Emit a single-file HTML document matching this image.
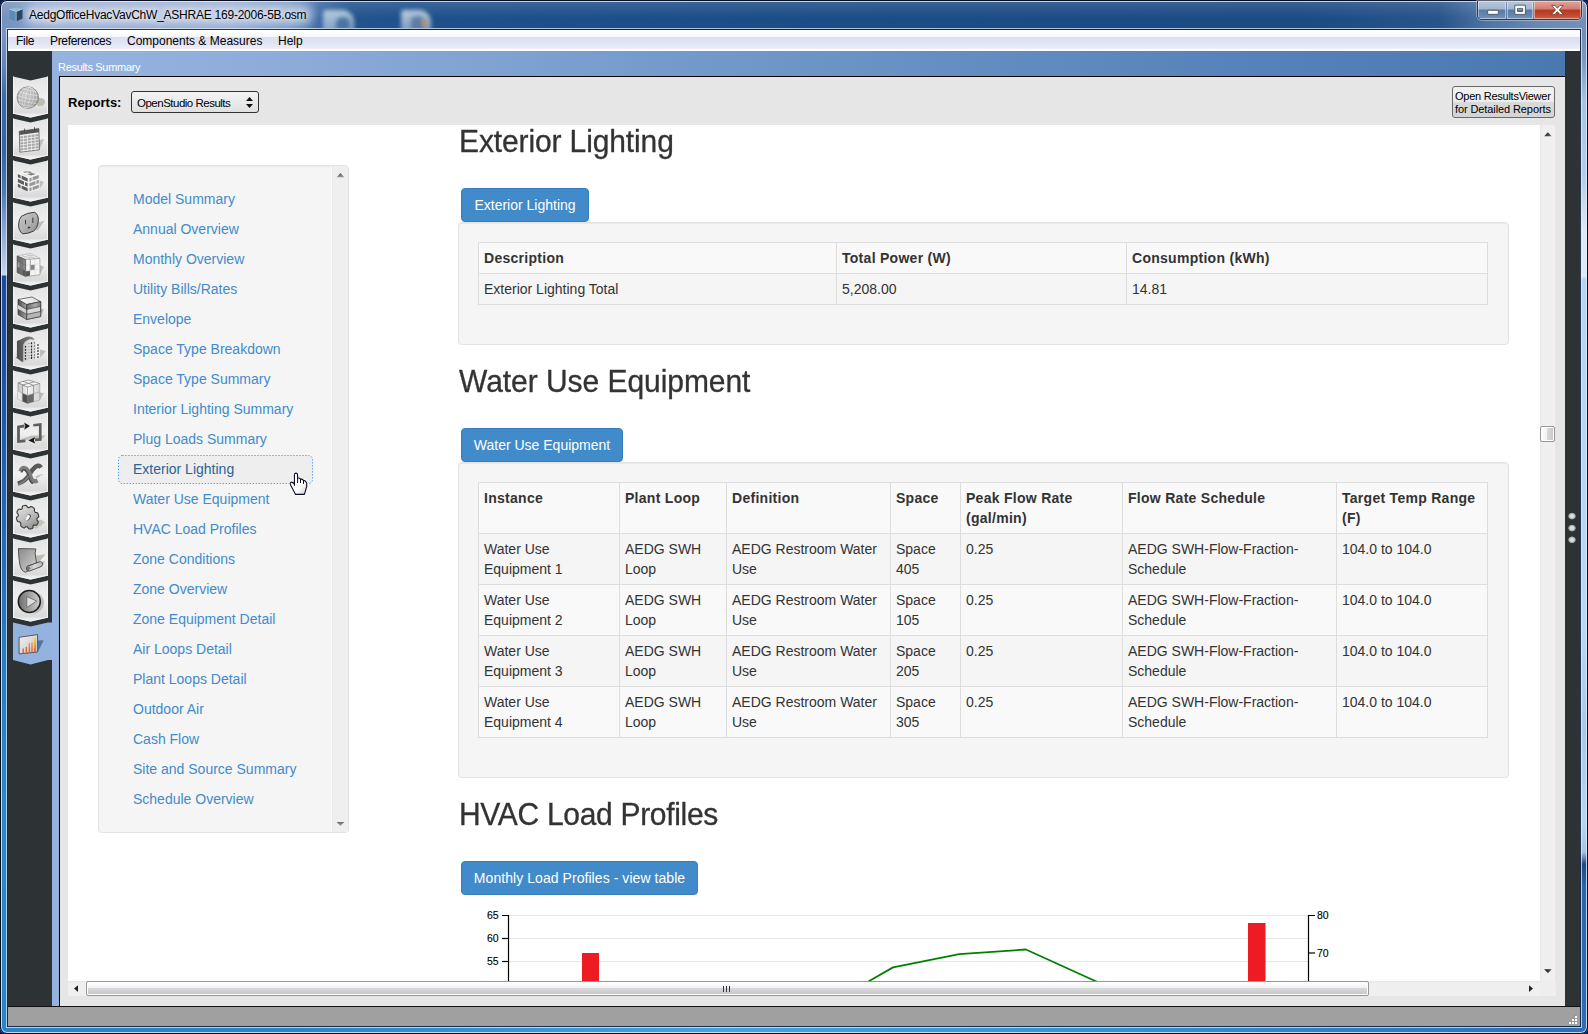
<!DOCTYPE html>
<html lang="en">
<head>
<meta charset="utf-8">
<title>AedgOfficeHvacVavChW_ASHRAE 169-2006-5B.osm</title>
<style>
*{box-sizing:border-box;}
html,body{margin:0;padding:0;}
body{width:1588px;height:1034px;overflow:hidden;position:relative;background:#061f4c;font-family:"Liberation Sans",sans-serif;}
.abs{position:absolute;}
/* ---------- window frame ---------- */
#frame{left:0;top:0;width:1588px;height:1034px;border-radius:7px;overflow:hidden;background:linear-gradient(180deg,rgba(255,255,255,.14) 0,rgba(255,255,255,0) 18px,rgba(255,255,255,0) 30px),linear-gradient(90deg,#7391bd 0px,#8fa6cc 60px,#8da4cb 230px,#6d8fc0 290px,#3c69a3 320px,#23548f 350px,#1e508c 420px,#1b4c86 900px,#1b4b83 1300px,#27548b 1440px,#4f76a5 1490px,#6a8ab3 1540px,#7390b8 1588px);}
#titleglow{left:24px;top:4px;width:290px;height:22px;background:rgba(225,232,245,.55);border-radius:11px;filter:blur(5px);}
#title{left:29px;top:7px;font-size:12px;line-height:16px;color:#000;white-space:nowrap;letter-spacing:-0.24px;text-shadow:0 0 5px rgba(255,255,255,.9),0 0 9px rgba(255,255,255,.8);}
#leftborder{left:0;top:30px;width:8px;height:1004px;background:linear-gradient(180deg,#7c96c0 0px,#6a88b8 30px,#3f68a4 70px,#3a629e 120px,#5078b0 160px,#8aa6d0 200px,#c4d4ea 243px,#c4d7ee 245px,#1b4c9c 246px,#1c50a0 330px,#2368b0 480px,#2a7cc2 620px,#2b88c8 780px,#2a84c6 1004px);}
#rightborder{left:1580px;top:30px;width:8px;height:1004px;background:linear-gradient(180deg,#6f8db6 0px,#7a99c2 30px,#a4c3e4 70px,#b4d0ee 150px,#dbe8f7 200px,#dce9f8 247px,#b2d5f8 248px,#b5d8fa 600px,#a6c8ee 700px,#b4d6f6 790px,#a2c4ea 822px,#1c4a82 834px,#2a66ac 858px,#2e6eb4 1004px);}
#outline{left:0;top:0;width:1588px;height:1034px;border:1px solid #050d20;border-radius:7px;box-shadow:inset 0 0 0 1px rgba(232,240,250,.8);}
#inline{left:6px;top:28px;width:1576px;height:1000px;border:1px solid rgba(225,235,248,.75);box-shadow:inset 0 0 0 1px rgba(16,28,52,.85);}
#bottomborder{left:0;top:1026px;width:1588px;height:8px;background:linear-gradient(90deg,#2a84c6 0,#2a86c8 300px,#45a4dc 720px,#3494d2 1100px,#2e74b8 1500px,#2e6eb4 1588px);}
/* ---------- menu ---------- */
#menubar{left:8px;top:30px;width:1572px;height:21px;background:linear-gradient(180deg,#ffffff 0,#ffffff 2px,#f6f7fc 7px,#dcdff0 7px,#e0e3f2 12px,#eceef8 19px,#ffffff 19.5px,#ffffff 21px);}
#menubar span{position:absolute;top:4px;font-size:12px;line-height:15px;color:#000;white-space:nowrap;}
/* ---------- main ---------- */
#main{left:8px;top:51px;width:1572px;height:955px;background:#2d3234;}
#hdr{left:52px;top:51px;width:1513px;height:955px;background:linear-gradient(90deg,#95b3de 0,#8eadda 200px,#6f97c9 700px,#5582b9 1200px,#4a79b0 1513px);}
#strip{left:52px;top:77px;width:7px;height:929px;background:#95b3de;}
#hdrtxt{left:58px;top:60px;font-size:11px;line-height:14px;color:#fff;white-space:nowrap;letter-spacing:-0.3px;}
#panel{left:59px;top:76px;width:1506px;height:930px;background:#e6e6e6;border-left:1px solid #000;border-top:1px solid #000;}
#status{left:8px;top:1006px;width:1572px;height:20px;background:#a0a0a0;border-top:1px solid #111;}
/* ---------- toolbar ---------- */
#rlabel{left:68px;top:95px;font-size:13px;font-weight:bold;line-height:16px;color:#000;white-space:nowrap;}
#sel{left:131px;top:91px;width:128px;height:22px;border:1px solid #333;border-radius:3px;background:linear-gradient(180deg,#f4f4f4,#e0e0e0);}
#sel span{position:absolute;left:5px;top:4px;font-size:11.5px;line-height:15px;color:#000;white-space:nowrap;letter-spacing:-0.5px;}
#btn{left:1452px;top:86px;width:103px;height:32px;border:1px solid #6a6a6a;border-radius:3px;background:linear-gradient(180deg,#f2f2f2 0,#ececec 50%,#dadada 51%,#d4d4d4 100%);font-size:11px;line-height:13px;color:#000;padding:3px 0 0 2px;white-space:nowrap;letter-spacing:-0.25px;}
/* ---------- web view ---------- */
#web{left:68px;top:125px;width:1472px;height:856px;background:#fff;overflow:hidden;font-family:"Liberation Sans",sans-serif;font-size:14px;line-height:20px;color:#333;}
#vsb{left:1540px;top:125px;width:15px;height:856px;background:linear-gradient(90deg,#e6e6e6 0,#efefef 2px,#f0f0f0 100%);}
#hsb{left:68px;top:981px;width:1472px;height:15px;background:linear-gradient(180deg,#e6e6e6 0,#efefef 2px,#f0f0f0 100%);}
#corner{left:1540px;top:981px;width:16px;height:15px;background:#eeeeee;}
.well{position:absolute;background:#f5f5f5;border:1px solid #e3e3e3;border-radius:4px;box-shadow:inset 0 1px 1px rgba(0,0,0,.05);}
#nav a{position:absolute;left:34px;color:#428bca;font-size:14px;line-height:20px;white-space:nowrap;text-decoration:none;}
h2{position:absolute;margin:0;left:391px;transform-origin:0 26.9px;transform:scaleY(1.06);-webkit-text-stroke:0.3px #333;font-size:30px;line-height:33px;font-weight:500;color:#333;white-space:nowrap;font-weight:normal;}
.bbtn{position:absolute;left:393px;height:34px;background:#428bca;border:1px solid #357ebd;border-radius:4px;color:#fff;font-size:14px;line-height:20px;padding:6px 0;text-align:center;white-space:nowrap;}
table{position:absolute;border-collapse:collapse;border:1px solid #ddd;table-layout:fixed;}
td,th{border:1px solid #ddd;padding:5px;text-align:left;vertical-align:top;font-size:14px;line-height:20px;color:#333;}
th{font-weight:bold;letter-spacing:0.28px;}
tr.o td, tr.o th{background:#f9f9f9;}

/* ---------- window controls ---------- */
#wc{left:1477px;top:1px;width:105px;height:19px;border:1px solid #2a3a55;border-top:none;border-radius:0 0 5px 5px;overflow:hidden;box-shadow:0 0 0 1px rgba(255,255,255,.35);}
#wc div{position:absolute;top:0;height:18px;}
.wb{background:linear-gradient(180deg,#b9c8db 0,#a3b6ce 8px,#587aa4 9px,#6686ae 14px,#7d99bd 19px);box-shadow:inset 0 0 0 1px rgba(255,255,255,.45);}
#wclose{background:linear-gradient(180deg,#e3a399 0,#d27e70 8px,#b33a26 9px,#c3472c 14px,#cf6a4c 19px);box-shadow:inset 0 0 0 1px rgba(255,255,255,.45);}

/* scrollbars */
.thumbv{position:absolute;border:1px solid #979797;border-radius:2px;background:linear-gradient(90deg,#ffffff 0,#f3f3f3 45%,#dcdce0 46%,#c9c9ce 90%,#e4e4e4 100%);box-shadow:inset 0 0 0 1px #fff;}
.thumbh{position:absolute;border:1px solid #979797;border-radius:2px;background:linear-gradient(180deg,#ffffff 0,#f1f1f1 45%,#d9d9dd 46%,#c8c8cd 90%,#e4e4e4 100%);box-shadow:inset 0 0 0 1px #fff;}
</style>
</head>
<body>
<div id="frame" class="abs"><div id="leftborder" class="abs"></div><div id="rightborder" class="abs"></div><div id="bottomborder" class="abs"></div></div>
<div id="titleglow" class="abs"></div>
<div id="outline" class="abs"></div>
<div id="inline" class="abs"></div>
<div class="abs" style="left:0;top:2px;width:1588px;height:26px;overflow:hidden;">
<div class="abs" style="left:323px;top:8px;width:31px;height:22px;background:linear-gradient(180deg,rgba(196,215,228,.9),rgba(150,182,210,.75));border-radius:3px 12px 0 0;filter:blur(2.2px);"></div>
<div class="abs" style="left:336px;top:15px;width:14px;height:13px;background:rgba(52,96,150,.75);border-radius:6px 6px 0 0;filter:blur(2.2px);"></div>
<div class="abs" style="left:401px;top:8px;width:30px;height:22px;background:linear-gradient(180deg,rgba(200,216,228,.9),rgba(150,180,208,.75));border-radius:3px 12px 0 0;filter:blur(2.2px);"></div>
<div class="abs" style="left:411px;top:14px;width:13px;height:14px;background:rgba(70,104,150,.7);border-radius:5px 5px 0 0;filter:blur(2.2px);"></div>
<div class="abs" style="left:421px;top:17px;width:6px;height:8px;background:rgba(196,140,96,.7);border-radius:3px;filter:blur(1.8px);"></div>
</div>
<svg class="abs" style="left:8px;top:6px" width="16" height="17" viewBox="0 0 16 17"><polygon points="1.5,3.2 8.5,1.2 14.5,3 14.5,12.6 8.2,15.6 1.5,12.8" fill="#6f9cbf" opacity=".9"/><polygon points="1.5,3.2 8.2,5.4 8.2,15.6 1.5,12.8" fill="#5a8db4"/><polygon points="8.2,5.4 14.5,3 14.5,12.6 8.2,15.6" fill="#2a4566"/><polygon points="1.5,3.2 8.5,1.2 14.5,3 8.2,5.4" fill="#8fb8d2"/><polyline points="1.5,3.2 8.2,5.4 14.5,3" fill="none" stroke="#d5e6f2" stroke-width=".6"/><line x1="8.2" y1="5.4" x2="8.2" y2="15.6" stroke="#cfe2ef" stroke-width=".6"/></svg>
<div id="title" class="abs">AedgOfficeHvacVavChW_ASHRAE 169-2006-5B.osm</div>
<div id="menubar" class="abs"><span style="left:8px;letter-spacing:-0.3px">File</span><span style="left:42px;letter-spacing:-0.33px">Preferences</span><span style="left:119px">Components &amp; Measures</span><span style="left:270px">Help</span></div>
<div id="main" class="abs"></div>
<div id="hdr" class="abs"></div>
<div id="hdrtxt" class="abs">Results Summary</div>
<div id="panel" class="abs"></div>
<div id="status" class="abs"></div>
<!--SIDEBAR--><svg class="abs" style="left:8px;top:51px" width="44" height="955" viewBox="0 0 44 955">
<defs>
<linearGradient id="tg" x1="0" y1="0" x2="0" y2="1"><stop offset="0" stop-color="#e4e4e4"/><stop offset=".1" stop-color="#e6e6e6"/><stop offset=".5" stop-color="#f0f0f0"/><stop offset=".78" stop-color="#dedede"/><stop offset=".88" stop-color="#dadada"/><stop offset=".93" stop-color="#ececec"/><stop offset="1" stop-color="#f4f4f4"/></linearGradient>
<radialGradient id="gl" cx=".42" cy=".36" r=".7"><stop offset="0" stop-color="#cacaca"/><stop offset=".6" stop-color="#b0b0b0"/><stop offset="1" stop-color="#8a8a8a"/></radialGradient>
<linearGradient id="og" x1="0" y1="0" x2="1" y2="1"><stop offset="0" stop-color="#c8c8c8"/><stop offset=".5" stop-color="#b2b2b2"/><stop offset="1" stop-color="#8e8e8e"/></linearGradient>
<linearGradient id="st" x1="0" y1="0" x2="1" y2="0"><stop offset="0" stop-color="#fafafa"/><stop offset="1" stop-color="#dcdcdc"/></linearGradient>
<linearGradient id="sl" x1="0" y1="0" x2="1" y2="0"><stop offset="0" stop-color="#4e4e4e"/><stop offset="1" stop-color="#a6a6a6"/></linearGradient>
<linearGradient id="sr1" x1="0" y1="0" x2="1" y2="0"><stop offset="0" stop-color="#6a6a6a"/><stop offset=".6" stop-color="#aaa"/><stop offset="1" stop-color="#7a7a7a"/></linearGradient>
<linearGradient id="bl" x1="0" y1="0" x2="1" y2="0"><stop offset="0" stop-color="#4a4a4a"/><stop offset="1" stop-color="#8a8a8a"/></linearGradient>
<linearGradient id="bf" x1="0" y1="0" x2="1" y2="0"><stop offset="0" stop-color="#c4c4c4"/><stop offset=".6" stop-color="#e6e6e6"/><stop offset="1" stop-color="#d0d0d0"/></linearGradient>
<linearGradient id="c2l" x1="0" y1="0" x2="1" y2="0"><stop offset="0" stop-color="#c6c6c6"/><stop offset="1" stop-color="#f2f2f2"/></linearGradient>
<linearGradient id="c2r" x1="0" y1="0" x2="1" y2="0"><stop offset="0" stop-color="#f6f6f6"/><stop offset="1" stop-color="#d2d2d2"/></linearGradient>
<linearGradient id="gg" x1="0.2" y1="0" x2="0.8" y2="1"><stop offset="0" stop-color="#dedede"/><stop offset=".45" stop-color="#c2c2c2"/><stop offset="1" stop-color="#8c8c8c"/></linearGradient>
<linearGradient id="sc" x1="0" y1="0" x2="1" y2="1"><stop offset="0" stop-color="#8a8a8a"/><stop offset=".6" stop-color="#b6b6b6"/><stop offset="1" stop-color="#dcdcdc"/></linearGradient>
<linearGradient id="sc2" x1="0" y1="0" x2="1" y2="0"><stop offset="0" stop-color="#a2a2a2"/><stop offset=".5" stop-color="#dadada"/><stop offset="1" stop-color="#b8b8b8"/></linearGradient>
<linearGradient id="pg" x1="0" y1="0" x2="1" y2="0"><stop offset="0" stop-color="#6c6c6c"/><stop offset=".55" stop-color="#a4a4a4"/><stop offset="1" stop-color="#d0d0d0"/></linearGradient>
<linearGradient id="cg" x1="0" y1="0" x2="1" y2="1"><stop offset="0" stop-color="#f0f0f0"/><stop offset="1" stop-color="#c4c4c4"/></linearGradient>
<linearGradient id="ob" x1="0" y1="46" x2="0" y2="55" gradientUnits="userSpaceOnUse"><stop offset="0" stop-color="#f39a2a"/><stop offset="1" stop-color="#e34a2a"/></linearGradient>
<linearGradient id="ob2" x1="0" y1="41" x2="0" y2="55" gradientUnits="userSpaceOnUse"><stop offset="0" stop-color="#ffd21e"/><stop offset=".4" stop-color="#f39a2a"/><stop offset="1" stop-color="#e34a2a"/></linearGradient>
</defs>
<g transform="translate(0,0)">
<polygon points="5,25.5 22.5,29.5 40,25.5 40,62.5 22.5,66.5 5,62.5" fill="url(#tg)"/><polygon points="5,25.5 5.9,25.7 5.9,62.7 5,62.5" fill="#f6f6f6"/><polygon points="40,25.5 39.1,25.7 39.1,62.7 40,62.5" fill="#f4f4f4"/><polyline points="5,62.2 22.5,66.2 40,62.2" fill="none" stroke="#fafafa" stroke-width="0.8"/>
<ellipse cx="32.2" cy="51" rx="4.8" ry="4.1" fill="#bbbeb3"/><circle cx="19.8" cy="46.6" r="10.8" fill="url(#gl)" stroke="#7a7a7a" stroke-width="0.7"/><g fill="none" stroke="#f2f2f2" stroke-width="0.5" opacity=".9" transform="rotate(12 19.8 46.6)"><ellipse cx="19.8" cy="46.6" rx="2.2" ry="10.5"/><ellipse cx="19.8" cy="46.6" rx="5.6" ry="10.5"/><ellipse cx="19.8" cy="46.6" rx="8.6" ry="10.5"/><path d="M12.43,39.00 Q19.80,39.59 27.17,39.00"/><path d="M10.07,42.60 Q19.80,43.86 29.53,42.60"/><path d="M9.30,46.60 Q19.80,48.60 30.30,46.60"/><path d="M10.07,50.60 Q19.80,51.86 29.53,50.60"/><path d="M12.43,54.20 Q19.80,54.79 27.17,54.20"/></g>
</g>
<g transform="translate(0,42)">
<polygon points="5,25.5 22.5,29.5 40,25.5 40,62.5 22.5,66.5 5,62.5" fill="url(#tg)"/><polygon points="5,25.5 5.9,25.7 5.9,62.7 5,62.5" fill="#f6f6f6"/><polygon points="40,25.5 39.1,25.7 39.1,62.7 40,62.5" fill="#f4f4f4"/><polyline points="5,62.2 22.5,66.2 40,62.2" fill="none" stroke="#fafafa" stroke-width="0.8"/>
<polygon points="30.9,47.2 36.1,45.9 32.4,54.4 30.9,55" fill="#bdc0b6"/>
<polygon points="11.3,38.3 30.9,35.6 31.4,56.8 11.8,59.2" fill="#ececec" stroke="#5a5a5a" stroke-width="0.8"/>
<polygon points="11.3,38.3 30.9,35.6 31,39.3 11.4,42" fill="#555"/>
<g stroke="#a6a6a6" stroke-width="2.0" fill="none">
<line x1="12.3" y1="44.6" x2="30.6" y2="42.1"/><line x1="12.3" y1="47.6" x2="30.6" y2="45.1"/><line x1="12.3" y1="50.6" x2="30.6" y2="48.1"/><line x1="12.3" y1="53.6" x2="30.6" y2="51.1"/><line x1="12.3" y1="56.6" x2="30.6" y2="54.1"/></g>
<g stroke="#f2f2f2" stroke-width="0.8"><line x1="15.5" y1="42" x2="15.9" y2="58.5"/><line x1="19.3" y1="41.4" x2="19.7" y2="58"/><line x1="23.1" y1="40.9" x2="23.5" y2="57.6"/><line x1="26.9" y1="40.4" x2="27.3" y2="57.2"/></g>
<g stroke="#444" stroke-width="0.9"><line x1="16.6" y1="35.6" x2="16.7" y2="39.6"/><line x1="26.5" y1="34.2" x2="26.6" y2="38.2"/></g>
</g>
<g transform="translate(0,84)">
<polygon points="5,25.5 22.5,29.5 40,25.5 40,62.5 22.5,66.5 5,62.5" fill="url(#tg)"/><polygon points="5,25.5 5.9,25.7 5.9,62.7 5,62.5" fill="#f6f6f6"/><polygon points="40,25.5 39.1,25.7 39.1,62.7 40,62.5" fill="#f4f4f4"/><polyline points="5,62.2 22.5,66.2 40,62.2" fill="none" stroke="#fafafa" stroke-width="0.8"/>
<polygon points="31.4,45.5 36,47 32,53.5 31.4,54" fill="#bdc0b6"/>
<polygon points="9.1,37.5 20,34.8 31.4,38.6 20.5,42.6" fill="#f1f1f1"/>
<polygon points="9.1,37.5 20.5,42.6 20.5,57.6 9.1,52.3" fill="#f4f4f4"/>
<polygon points="20.5,42.6 31.4,38.6 31.4,54.3 20.5,57.6" fill="#f4f4f4"/>
<g fill="#5f5f5f">
<polygon points="9.8,38.9 12.6,40.2 12.6,43.6 9.8,42.3"/><polygon points="13.6,40.6 19.6,43.3 19.6,46.7 13.6,44"/>
<polygon points="9.8,43.8 16,46.6 16,50 9.8,47.2"/><polygon points="17,47.1 19.6,48.2 19.6,51.6 17,50.5"/>
<polygon points="9.8,48.7 12.6,50 12.6,53.2 9.8,51.9"/><polygon points="13.6,50.4 19.6,53.1 19.6,56.4 13.6,53.7"/>
</g>
<g fill="#979797">
<polygon points="21.4,43.3 23.6,42.5 23.6,45.9 21.4,46.7"/><polygon points="24.6,42.1 30.8,39.9 30.8,43.3 24.6,45.5"/>
<polygon points="21.4,48.2 27.4,46 27.4,49.4 21.4,51.6"/><polygon points="28.4,45.6 30.8,44.8 30.8,48.2 28.4,49"/>
<polygon points="21.4,53.1 23.6,52.3 23.6,55.6 21.4,56.4"/><polygon points="24.6,51.9 30.8,49.7 30.8,53.1 24.6,55.3"/>
</g>
<g fill="#7b7b7b"><polygon points="15,37 18,36.2 20,36.9 17,37.7"/><polygon points="20.8,36.2 24,37.2 22,37.9 19,36.9"/><polygon points="19,39 24,37.9 27.8,39.1 23,40.4"/><polygon points="12.4,38.2 16.6,39.8 19.4,41.2 15,39.2"/></g>
</g>
<g transform="translate(0,126)">
<polygon points="5,25.5 22.5,29.5 40,25.5 40,62.5 22.5,66.5 5,62.5" fill="url(#tg)"/><polygon points="5,25.5 5.9,25.7 5.9,62.7 5,62.5" fill="#f6f6f6"/><polygon points="40,25.5 39.1,25.7 39.1,62.7 40,62.5" fill="#f4f4f4"/><polyline points="5,62.2 22.5,66.2 40,62.2" fill="none" stroke="#fafafa" stroke-width="0.8"/>
<polygon points="30,45.5 36.8,43.5 30.5,52.5 28,54" fill="#bdc0b6"/>
<path d="M13.5,39.2 Q19,35.6 26.5,35.3 Q30.8,37.5 30.3,44 Q29.5,51.5 25.5,54.2 Q20,56.8 14.5,56.8 Q10.3,53.5 10.6,47 Q10.9,42 13.5,39.2 Z" fill="url(#og)" stroke="#2e2e2e" stroke-width="0.9"/>
<line x1="17.5" y1="42.8" x2="17.6" y2="47.3" stroke="#2a2a2a" stroke-width="0.9"/><line x1="24.8" y1="40.6" x2="24.9" y2="46" stroke="#2a2a2a" stroke-width="0.9"/>
<path d="M19.3,51.6 Q20.8,47.6 22.6,51 Z" fill="#333"/>
</g>
<g transform="translate(0,168)">
<polygon points="5,25.5 22.5,29.5 40,25.5 40,62.5 22.5,66.5 5,62.5" fill="url(#tg)"/><polygon points="5,25.5 5.9,25.7 5.9,62.7 5,62.5" fill="#f6f6f6"/><polygon points="40,25.5 39.1,25.7 39.1,62.7 40,62.5" fill="#f4f4f4"/><polyline points="5,62.2 22.5,66.2 40,62.2" fill="none" stroke="#fafafa" stroke-width="0.8"/>
<polygon points="31.9,45.9 35.9,47.7 31.9,55.8" fill="#b9bbb4"/><polygon points="9.1,36.9 22.6,34.3 31.9,39.4 17.6,40.6" fill="#f2f2f2" stroke="#9a9a9a" stroke-width="0.5"/><g stroke="#b5b5b5" stroke-width="0.5" fill="none"><line x1="13.6" y1="36" x2="22.4" y2="40.2"/><line x1="18.1" y1="35.2" x2="27.2" y2="39.8"/><line x1="12" y1="38.2" x2="25.8" y2="36"/><line x1="14.8" y1="39.4" x2="28.8" y2="37.7"/></g><polygon points="19,36 23,35.4 25.4,36.6 21.4,37.3" fill="#c9c9c9"/><polygon points="9.1,36.9 17.6,40.6 17.6,57.6 9.1,53.6" fill="#6e6e6e"/><polygon points="9.35,37.34 11.65,38.35 11.65,43.27 9.35,42.24" fill="#6a6a6a"/><polygon points="12.15,38.56 14.55,39.61 14.55,44.57 12.15,43.49" fill="#747474"/><polygon points="15.05,39.83 17.35,40.83 17.35,45.82 15.05,44.79" fill="#868686"/><polygon points="9.35,42.91 11.65,43.94 11.65,48.87 9.35,47.81" fill="#9c9c9c"/><polygon points="12.15,44.17 14.55,45.24 14.55,50.20 12.15,49.10" fill="#7a7a7a"/><polygon points="15.05,45.46 17.35,46.49 17.35,51.48 15.05,50.43" fill="#8a8a8a"/><polygon points="9.35,48.48 11.65,49.54 11.65,54.46 9.35,53.38" fill="#646464"/><polygon points="12.15,49.77 14.55,50.87 14.55,55.83 12.15,54.70" fill="#6c6c6c"/><polygon points="15.05,51.10 17.35,52.16 17.35,57.14 15.05,56.06" fill="#565656"/><polygon points="9.1,36.9 17.6,40.6 17.6,57.6 9.1,53.6" fill="none" stroke="#4a4a4a" stroke-width="0.6"/><polygon points="17.6,40.6 31.9,39.4 31.9,55.8 17.6,57.6" fill="#f4f4f4" stroke="#8c8c8c" stroke-width="0.6"/><polygon points="17.90,52.15 22.00,51.69 22.00,56.79 17.90,57.31" fill="#555555"/><polygon points="22.60,46.03 26.70,45.63 26.70,50.67 22.60,51.12" fill="#828282"/><g stroke="#d2d2d2" stroke-width="0.5"><line x1="22.30" y1="40.21" x2="22.30" y2="57.01"/><line x1="27.00" y1="39.81" x2="27.00" y2="56.42"/><line x1="17.6" y1="46.27" x2="31.9" y2="44.87"/><line x1="17.6" y1="51.93" x2="31.9" y2="50.33"/></g><line x1="17.6" y1="40.6" x2="17.6" y2="57.6" stroke="#5a5a5a" stroke-width="0.7"/><line x1="22.3" y1="40.3" x2="22.3" y2="51.4" stroke="#7a7a7a" stroke-width="0.6"/>
</g>
<g transform="translate(0,210)">
<polygon points="5,25.5 22.5,29.5 40,25.5 40,62.5 22.5,66.5 5,62.5" fill="url(#tg)"/><polygon points="5,25.5 5.9,25.7 5.9,62.7 5,62.5" fill="#f6f6f6"/><polygon points="40,25.5 39.1,25.7 39.1,62.7 40,62.5" fill="#f4f4f4"/><polyline points="5,62.2 22.5,66.2 40,62.2" fill="none" stroke="#fafafa" stroke-width="0.8"/>
<polygon points="32.7,47.5 36,48.5 33,54.5 32.7,55" fill="#bcbcb8"/>
<polygon points="10,38.5 24,36 32.7,40.7 18.7,43.6" fill="url(#st)" stroke="#3a3a3a" stroke-width="0.7"/>
<polygon points="10,38.5 18.7,43.6 18.7,58.5 10,53.6" fill="url(#sl)" stroke="#3a3a3a" stroke-width="0.7"/>
<polygon points="18.7,43.6 32.7,40.7 32.7,55.5 18.7,58.5" fill="#d9d9d9" stroke="#3a3a3a" stroke-width="0.7"/>
<polygon points="18.7,43.6 32.7,40.7 32.7,45.2 18.7,48.2" fill="url(#sr1)"/>
<polygon points="18.7,53.4 32.7,50.4 32.7,55.5 18.7,58.5" fill="#b4b4b4"/>
<polygon points="10,43.4 18.7,48.4 18.7,53.4 10,48.4" fill="#d0d0d0"/>
<g stroke="#3a3a3a" stroke-width="0.7" fill="none"><polyline points="10,43.4 18.7,48.4 32.7,45.4"/><polyline points="10,48.4 18.7,53.4 32.7,50.4"/><polygon points="18.7,43.6 32.7,40.7 32.7,55.5 18.7,58.5"/></g>
</g>
<g transform="translate(0,252)">
<polygon points="5,25.5 22.5,29.5 40,25.5 40,62.5 22.5,66.5 5,62.5" fill="url(#tg)"/><polygon points="5,25.5 5.9,25.7 5.9,62.7 5,62.5" fill="#f6f6f6"/><polygon points="40,25.5 39.1,25.7 39.1,62.7 40,62.5" fill="#f4f4f4"/><polyline points="5,62.2 22.5,66.2 40,62.2" fill="none" stroke="#fafafa" stroke-width="0.8"/>
<polygon points="32,46.5 37.9,47.9 32.2,54.8" fill="#b9bbb4"/><path d="M8,54.6 L8.9,54 L8.95,38.2 Q10.5,37 12.2,36.8 L15.1,35.3 Q18,33.4 21.3,33.5 Q24.6,33.8 26.6,36.2 L15.6,41.4 L15.5,58.4 L14.2,58.9 Z" fill="url(#bl)"/><path d="M15.5,58.3 L15.5,41.2 Q16.4,38.4 19.4,37.2 Q23.2,35.4 25.8,37.2 L28.1,39 L28.1,55.9 Z" fill="url(#bf)"/><path d="M28.1,55.9 L28.1,39.6 L29.4,38.4 L31.9,40 L31.9,55.1 Z" fill="#ececec"/><line x1="28.1" y1="39.4" x2="28.1" y2="55.9" stroke="#fafafa" stroke-width="0.7"/><rect x="16.88" y="42.90" width="1.25" height="1.80" rx="0.4" fill="#2c2c2c"/><rect x="16.88" y="46.00" width="1.25" height="1.80" rx="0.4" fill="#2c2c2c"/><rect x="16.88" y="49.00" width="1.25" height="1.80" rx="0.4" fill="#2c2c2c"/><rect x="16.88" y="51.90" width="1.25" height="1.80" rx="0.4" fill="#2c2c2c"/><rect x="16.88" y="55.00" width="1.25" height="1.80" rx="0.4" fill="#2c2c2c"/><rect x="20.25" y="39.95" width="1.50" height="1.10" rx="0.4" fill="#9a9a9a"/><rect x="22.85" y="39.30" width="1.30" height="2.00" rx="0.4" fill="#222222"/><rect x="25.85" y="39.25" width="1.10" height="1.30" rx="0.4" fill="#555555"/><rect x="20.25" y="43.05" width="1.50" height="1.10" rx="0.4" fill="#9a9a9a"/><rect x="22.85" y="42.40" width="1.30" height="2.00" rx="0.4" fill="#222222"/><rect x="25.85" y="42.35" width="1.10" height="1.30" rx="0.4" fill="#555555"/><rect x="20.25" y="46.15" width="1.50" height="1.10" rx="0.4" fill="#9a9a9a"/><rect x="22.85" y="45.50" width="1.30" height="2.00" rx="0.4" fill="#222222"/><rect x="25.85" y="45.45" width="1.10" height="1.30" rx="0.4" fill="#555555"/><rect x="20.25" y="48.95" width="1.50" height="1.10" rx="0.4" fill="#9a9a9a"/><rect x="22.85" y="48.30" width="1.30" height="2.00" rx="0.4" fill="#222222"/><rect x="25.85" y="48.25" width="1.10" height="1.30" rx="0.4" fill="#555555"/><rect x="20.25" y="52.05" width="1.50" height="1.10" rx="0.4" fill="#9a9a9a"/><rect x="22.85" y="51.40" width="1.30" height="2.00" rx="0.4" fill="#222222"/><rect x="25.85" y="51.35" width="1.10" height="1.30" rx="0.4" fill="#555555"/><rect x="20.25" y="54.75" width="1.50" height="1.10" rx="0.4" fill="#9a9a9a"/><rect x="22.85" y="54.10" width="1.30" height="2.00" rx="0.4" fill="#222222"/><rect x="25.85" y="54.05" width="1.10" height="1.30" rx="0.4" fill="#555555"/><rect x="29.15" y="41.05" width="1.70" height="1.90" rx="0.4" fill="#585858"/><rect x="29.15" y="44.15" width="1.70" height="1.90" rx="0.4" fill="#585858"/><rect x="29.15" y="47.05" width="1.70" height="1.90" rx="0.4" fill="#585858"/><rect x="29.15" y="50.05" width="1.70" height="1.90" rx="0.4" fill="#585858"/><rect x="29.15" y="53.15" width="1.70" height="1.90" rx="0.4" fill="#585858"/>
</g>
<g transform="translate(0,294)">
<polygon points="5,25.5 22.5,29.5 40,25.5 40,62.5 22.5,66.5 5,62.5" fill="url(#tg)"/><polygon points="5,25.5 5.9,25.7 5.9,62.7 5,62.5" fill="#f6f6f6"/><polygon points="40,25.5 39.1,25.7 39.1,62.7 40,62.5" fill="#f4f4f4"/><polyline points="5,62.2 22.5,66.2 40,62.2" fill="none" stroke="#fafafa" stroke-width="0.8"/>
<polygon points="31.8,47.5 36,48.3 32.5,54 31.8,54.6" fill="#bcbcb8"/>
<polygon points="10,37.8 20.5,35 31.8,38.6 19.5,42.2" fill="#f4f4f4" stroke="#6a6a6a" stroke-width="0.6"/>
<polygon points="10,37.8 19.5,42.2 19.5,58.5 10,54" fill="url(#c2l)" stroke="#6a6a6a" stroke-width="0.5"/>
<polygon points="19.5,42.2 31.8,38.6 31.8,55 19.5,58.5" fill="url(#c2r)" stroke="#8a8a8a" stroke-width="0.5"/>
<polygon points="14.4,48 19.5,50.4 19.5,58.5 14.4,56.2" fill="#4f4f4f"/>
<polygon points="19.5,50.4 25.6,48.6 25.6,56.8 19.5,58.5" fill="#696969"/>
<polygon points="10,46 14.4,48 14.4,56.2 10,54" fill="#e8e8e8"/>
<g stroke="#6a6a6a" stroke-width="0.6" fill="none"><line x1="15" y1="36.4" x2="25.8" y2="40.4"/><line x1="14.6" y1="40" x2="26.2" y2="36.8"/><line x1="14.4" y1="39.9" x2="14.4" y2="56.2"/><line x1="25.6" y1="40.4" x2="25.6" y2="56.8"/><polyline points="10,46 19.5,50.4 31.8,46.8" stroke="#9a9a9a"/></g>
</g>
<g transform="translate(0,336)">
<polygon points="5,25.5 22.5,29.5 40,25.5 40,62.5 22.5,66.5 5,62.5" fill="url(#tg)"/><polygon points="5,25.5 5.9,25.7 5.9,62.7 5,62.5" fill="#f6f6f6"/><polygon points="40,25.5 39.1,25.7 39.1,62.7 40,62.5" fill="#f4f4f4"/><polyline points="5,62.2 22.5,66.2 40,62.2" fill="none" stroke="#fafafa" stroke-width="0.8"/>
<polygon points="13,52 24,48.5 37.5,48.5 33.5,52.6 13,53" fill="#bdc0b6"/>
<g fill="#5e5e5e">
<polygon points="9.1,38.7 16.5,37.6 16.5,40.4 11.9,41 11.9,52.9 17.4,52.5 17.4,55.3 9.1,55.9"/>
<polygon points="25.3,36.9 33.6,36 33.6,53.8 27,54.3 27,51.6 30.9,51.3 30.9,39 25.3,39.6"/>
</g>
<polygon points="16.1,35.5 22,38.9 16.1,42.7 17.4,39.1" fill="#151515"/>
<polygon points="27.2,50 20.4,53.4 27.2,56.6 25.8,53.3" fill="#151515"/>
</g>
<g transform="translate(0,378)">
<polygon points="5,25.5 22.5,29.5 40,25.5 40,62.5 22.5,66.5 5,62.5" fill="url(#tg)"/><polygon points="5,25.5 5.9,25.7 5.9,62.7 5,62.5" fill="#f6f6f6"/><polygon points="40,25.5 39.1,25.7 39.1,62.7 40,62.5" fill="#f4f4f4"/><polyline points="5,62.2 22.5,66.2 40,62.2" fill="none" stroke="#fafafa" stroke-width="0.8"/>
<path d="M27.4,47.6 Q31,45 36.8,45 Q32,46.2 28.6,49.4 Z" fill="#b9bcb2"/>
<g fill="none" stroke-linecap="butt">
<path d="M33,38.6 Q31.2,35.4 27.8,37.6 Q24,40.6 21.2,45.8 Q17.6,52.6 9.8,54.6" stroke="#5a5a5a" stroke-width="4.4"/>
<path d="M12.6,42.4 Q13.8,37.6 17.4,39.4 Q21,42 22.6,48 Q24,54 29.6,51.4" stroke="#7c7c7c" stroke-width="4.4"/>
<path d="M13.4,43.6 Q14.6,39.8 17,41.2 Q19.6,43.4 21,49 Q22.2,53.4 25,54.4" stroke="#505050" stroke-width="1.7"/>
<path d="M20.6,46.8 Q17.2,52.6 10.2,55.8" stroke="#7e7e7e" stroke-width="1.6"/>
</g>
</g>
<g transform="translate(0,420)">
<polygon points="5,25.5 22.5,29.5 40,25.5 40,62.5 22.5,66.5 5,62.5" fill="url(#tg)"/><polygon points="5,25.5 5.9,25.7 5.9,62.7 5,62.5" fill="#f6f6f6"/><polygon points="40,25.5 39.1,25.7 39.1,62.7 40,62.5" fill="#f4f4f4"/><polyline points="5,62.2 22.5,66.2 40,62.2" fill="none" stroke="#fafafa" stroke-width="0.8"/>
<path d="M23.2,50 L27,48.6 L29.6,49.8 L31.6,48.6 L34.4,49.2 L35,50.4 L36.9,50.8 L36.4,52.6 L34.2,53 L33.6,54.8 L30.8,55.2 L30,57.2 L26.6,57.6 L22,57.6 Z" fill="#c2c5ba"/><path d="M30.45,46.20 L29.91,46.62 L29.40,47.00 L29.08,47.37 L28.93,47.73 L28.87,48.10 L28.87,48.48 L28.98,48.90 L29.27,49.40 L29.72,49.98 L30.14,50.60 L30.28,51.14 L30.15,51.57 L29.98,51.98 L29.80,52.38 L29.60,52.77 L29.38,53.15 L29.15,53.53 L28.91,53.88 L28.61,54.20 L28.06,54.27 L27.36,54.14 L26.70,54.00 L26.20,53.98 L25.84,54.11 L25.54,54.30 L25.28,54.54 L25.08,54.89 L24.97,55.42 L24.92,56.12 L24.83,56.83 L24.57,57.28 L24.18,57.45 L23.77,57.59 L23.35,57.71 L22.93,57.80 L22.51,57.89 L22.07,57.95 L21.64,58.00 L21.19,57.97 L20.72,57.61 L20.26,57.00 L19.84,56.42 L19.46,56.04 L19.09,55.85 L18.73,55.76 L18.36,55.72 L17.97,55.78 L17.52,56.04 L17.01,56.45 L16.46,56.83 L15.95,56.93 L15.53,56.74 L15.11,56.52 L14.71,56.29 L14.31,56.04 L13.92,55.77 L13.54,55.49 L13.17,55.20 L12.84,54.85 L12.72,54.27 L12.77,53.54 L12.84,52.86 L12.80,52.34 L12.65,51.94 L12.43,51.61 L12.17,51.31 L11.81,51.07 L11.30,50.90 L10.61,50.77 L9.93,50.60 L9.46,50.29 L9.26,49.86 L9.09,49.41 L8.93,48.96 L8.79,48.51 L8.67,48.05 L8.56,47.59 L8.47,47.13 L8.45,46.66 L8.75,46.20 L9.29,45.78 L9.80,45.40 L10.12,45.03 L10.27,44.67 L10.33,44.30 L10.33,43.92 L10.22,43.50 L9.93,43.00 L9.48,42.42 L9.06,41.80 L8.92,41.26 L9.05,40.83 L9.22,40.42 L9.40,40.02 L9.60,39.63 L9.82,39.25 L10.05,38.87 L10.29,38.52 L10.59,38.20 L11.14,38.13 L11.84,38.26 L12.50,38.40 L13.00,38.42 L13.36,38.29 L13.66,38.10 L13.92,37.86 L14.12,37.51 L14.23,36.98 L14.28,36.28 L14.37,35.57 L14.63,35.12 L15.02,34.95 L15.43,34.81 L15.85,34.69 L16.27,34.60 L16.69,34.51 L17.13,34.45 L17.56,34.40 L18.01,34.43 L18.48,34.79 L18.94,35.40 L19.36,35.98 L19.74,36.36 L20.11,36.55 L20.47,36.64 L20.84,36.68 L21.23,36.62 L21.68,36.36 L22.19,35.95 L22.74,35.57 L23.25,35.47 L23.67,35.66 L24.09,35.88 L24.49,36.11 L24.89,36.36 L25.28,36.63 L25.66,36.91 L26.03,37.20 L26.36,37.55 L26.48,38.13 L26.43,38.86 L26.36,39.54 L26.40,40.06 L26.55,40.46 L26.77,40.79 L27.03,41.09 L27.39,41.33 L27.90,41.50 L28.59,41.63 L29.27,41.80 L29.74,42.11 L29.94,42.54 L30.11,42.99 L30.27,43.44 L30.41,43.89 L30.53,44.35 L30.64,44.81 L30.73,45.27 L30.75,45.74 Z" fill="url(#gg)" stroke="#3a3a3a" stroke-width="1.15" stroke-linejoin="round"/><ellipse cx="20.3" cy="46.4" rx="2.1" ry="3.3" transform="rotate(27 20.3 46.4)" fill="#3a3a3a"/><ellipse cx="19.8" cy="46.6" rx="1.6" ry="3.0" transform="rotate(27 19.8 46.6)" fill="#fbfbfb"/>
</g>
<g transform="translate(0,462)">
<polygon points="5,25.5 22.5,29.5 40,25.5 40,62.5 22.5,66.5 5,62.5" fill="url(#tg)"/><polygon points="5,25.5 5.9,25.7 5.9,62.7 5,62.5" fill="#f6f6f6"/><polygon points="40,25.5 39.1,25.7 39.1,62.7 40,62.5" fill="#f4f4f4"/><polyline points="5,62.2 22.5,66.2 40,62.2" fill="none" stroke="#fafafa" stroke-width="0.8"/>
<polygon points="28,42.6 37.4,41.2 31,49.6 37.4,48 34.6,52.6 28,54" fill="#bdc0b6"/>
<path d="M10.4,35.6 L27.8,35.9 Q26.6,39.5 27.6,44 Q28.6,48.6 28.2,50.4 L19.5,53.2 Q17.6,55.2 19.2,57 Q20.6,58.6 17.5,59.2 Q13.6,58.6 12,52.2 Q10.6,45.6 10.4,35.6 Z" fill="url(#sc)" stroke="#333" stroke-width="0.8"/>
<path d="M19.4,53.2 L32.4,48.6 Q35,49.2 34.6,51.6 L33.6,53.4 L21.6,58 Q19.6,58.6 18.9,56.6 Q18.4,54.4 19.4,53.2 Z" fill="url(#sc2)" stroke="#333" stroke-width="0.8"/>
<path d="M20.8,57.6 Q19.2,55.8 20.4,54.6 Q22,54.2 21.9,55.9" fill="none" stroke="#333" stroke-width="0.7"/>
</g>
<g transform="translate(0,504)">
<polygon points="5,25.5 22.5,29.5 40,25.5 40,62.5 22.5,66.5 5,62.5" fill="url(#tg)"/><polygon points="5,25.5 5.9,25.7 5.9,62.7 5,62.5" fill="#f6f6f6"/><polygon points="40,25.5 39.1,25.7 39.1,62.7 40,62.5" fill="#f4f4f4"/><polyline points="5,62.2 22.5,66.2 40,62.2" fill="none" stroke="#fafafa" stroke-width="0.8"/>
<circle cx="25.4" cy="47.8" r="10.6" fill="#bdbdbd"/>
<circle cx="21.3" cy="46.5" r="11" fill="url(#pg)" stroke="#1e1e1e" stroke-width="1.5"/>
<polygon points="18.8,41.6 28.8,46.1 18.8,52.4" fill="#dedede" stroke="#4a4a4a" stroke-width="0.6"/>
</g>
<g transform="translate(0,546)">
<polygon points="5,25.5 22.5,29.5 40,25.5 44,25.5 44,63 40,63 22.5,67.5 5,63" fill="#93b2de"/>
<polygon points="29.6,43.6 35.8,43.2 30.2,54.2 29.6,54.6" fill="#5574a6"/>
<polygon points="11.1,40.3 29.6,37.6 29.6,55 11.1,56.9" fill="url(#cg)" stroke="#4c4c4c" stroke-width="0.9"/>
<g stroke-linecap="round" stroke-width="1.3">
<line x1="15.2" y1="52" x2="15.2" y2="55.8" stroke="#e8582c"/><line x1="18.3" y1="50.4" x2="18.3" y2="55.5" stroke="#e8582c"/>
<line x1="21.3" y1="46.6" x2="21.3" y2="55.2" stroke="url(#ob)"/><line x1="24" y1="46" x2="24" y2="54.9" stroke="url(#ob)"/><line x1="27" y1="41.3" x2="27" y2="54.5" stroke="url(#ob2)" stroke-width="1.6"/>
</g>
</g>
</svg>
<!--/SIDEBAR-->
<div id="rlabel" class="abs">Reports:</div>
<div id="sel" class="abs"><span>OpenStudio Results</span><svg class="abs" style="left:113px;top:4px" width="9" height="13" viewBox="0 0 9 13"><path d="M1 5 L4.5 1 L8 5 Z M1 8 L4.5 12 L8 8 Z" fill="#111"/></svg></div>
<div id="btn" class="abs">Open ResultsViewer<br><span style="letter-spacing:-0.1px">for Detailed Reports</span></div>

<div id="web" class="abs">
<div id="nav" class="well" style="left:30px;top:40px;width:251px;height:668px;">
<div class="abs" style="left:232px;top:0;width:17px;height:666px;background:linear-gradient(90deg,#fafafa 0,#fafafa 1px,#e9e9e9 1px,#efefef 3px,#efefef 100%);border-radius:0 3px 3px 0;"></div><svg class="abs" style="left:233px;top:0" width="16" height="666" viewBox="0 0 16 666"><defs><linearGradient id="ag" x1="0" y1="0" x2="0" y2="1"><stop offset="0" stop-color="#555"/><stop offset="1" stop-color="#999"/></linearGradient><linearGradient id="ag2" x1="0" y1="0" x2="0" y2="1"><stop offset="0" stop-color="#666"/><stop offset="1" stop-color="#aaa"/></linearGradient></defs><path d="M4.6,11.2 L8.4,7 L12.2,11.2 Z" fill="url(#ag)"/><path d="M4.6,655.9 L12.2,655.9 L8.4,660 Z" fill="url(#ag2)"/></svg>
<svg class="abs" style="left:19px;top:289px" width="197" height="31" viewBox="0 0 197 31"><rect x="0" y="0" width="195" height="29" rx="4" fill="#eeeeee"/><rect x="0.5" y="0.5" width="194" height="28" rx="4" fill="none" stroke="#2389ff" stroke-width="1" stroke-dasharray="1 2"/></svg>
<a style="top:23px">Model Summary</a>
<a style="top:53px">Annual Overview</a>
<a style="top:83px">Monthly Overview</a>
<a style="top:113px">Utility Bills/Rates</a>
<a style="top:143px">Envelope</a>
<a style="top:173px">Space Type Breakdown</a>
<a style="top:203px">Space Type Summary</a>
<a style="top:233px">Interior Lighting Summary</a>
<a style="top:263px">Plug Loads Summary</a>
<a style="top:293px;color:#2a6496">Exterior Lighting</a>
<a style="top:323px">Water Use Equipment</a>
<a style="top:353px">HVAC Load Profiles</a>
<a style="top:383px">Zone Conditions</a>
<a style="top:413px">Zone Overview</a>
<a style="top:443px">Zone Equipment Detail</a>
<a style="top:473px">Air Loops Detail</a>
<a style="top:503px">Plant Loops Detail</a>
<a style="top:533px">Outdoor Air</a>
<a style="top:563px">Cash Flow</a>
<a style="top:593px">Site and Source Summary</a>
<a style="top:623px">Schedule Overview</a>
</div>
<h2 style="top:0px;letter-spacing:-0.12px">Exterior Lighting</h2>
<div class="bbtn" style="top:63px;width:128px">Exterior Lighting</div>
<div class="well" style="left:390px;top:97px;width:1051px;height:123px"></div>
<table style="left:410px;top:117px;width:1010px"><colgroup><col style="width:358px"><col style="width:290px"><col style="width:361px"></colgroup>
<tr class="o"><th>Description</th><th>Total Power (W)</th><th>Consumption (kWh)</th></tr>
<tr><td>Exterior Lighting Total</td><td>5,208.00</td><td>14.81</td></tr>
</table>
<h2 style="top:240px;letter-spacing:-0.05px">Water Use Equipment</h2>
<div class="bbtn" style="top:303px;width:162px">Water Use Equipment</div>
<div class="well" style="left:390px;top:337px;width:1051px;height:316px"></div>
<table style="left:410px;top:357px;width:1010px"><colgroup><col style="width:141px"><col style="width:107px"><col style="width:164px"><col style="width:70px"><col style="width:162px"><col style="width:214px"><col style="width:151px"></colgroup>
<tr class="o"><th>Instance</th><th>Plant Loop</th><th>Definition</th><th>Space</th><th>Peak Flow Rate (gal/min)</th><th>Flow Rate Schedule</th><th>Target Temp Range (F)</th></tr>
<tr><td>Water Use Equipment 1</td><td>AEDG SWH Loop</td><td>AEDG Restroom Water Use</td><td>Space 405</td><td>0.25</td><td>AEDG SWH-Flow-Fraction-Schedule</td><td>104.0 to 104.0</td></tr>
<tr class="o"><td>Water Use Equipment 2</td><td>AEDG SWH Loop</td><td>AEDG Restroom Water Use</td><td>Space 105</td><td>0.25</td><td>AEDG SWH-Flow-Fraction-Schedule</td><td>104.0 to 104.0</td></tr>
<tr><td>Water Use Equipment 3</td><td>AEDG SWH Loop</td><td>AEDG Restroom Water Use</td><td>Space 205</td><td>0.25</td><td>AEDG SWH-Flow-Fraction-Schedule</td><td>104.0 to 104.0</td></tr>
<tr class="o"><td>Water Use Equipment 4</td><td>AEDG SWH Loop</td><td>AEDG Restroom Water Use</td><td>Space 305</td><td>0.25</td><td>AEDG SWH-Flow-Fraction-Schedule</td><td>104.0 to 104.0</td></tr>
</table>
<h2 style="top:673px;letter-spacing:-0.31px">HVAC Load Profiles</h2>
<div class="bbtn" style="top:736px;width:237px;letter-spacing:0.06px">Monthly Load Profiles - view table</div>
<svg class="abs" style="left:400px;top:770px" width="1000" height="90" viewBox="468 895 1000 90" font-family="Liberation Sans, sans-serif">
<g stroke="#e6e6e6" stroke-width="1"><line x1="508" y1="915.5" x2="1308" y2="915.5"/><line x1="508" y1="938.5" x2="1308" y2="938.5"/><line x1="508" y1="961.5" x2="1308" y2="961.5"/></g>
<rect x="582" y="953" width="17" height="40" fill="#ed1c24"/>
<rect x="1248" y="923" width="17.5" height="70" fill="#ed1c24"/>
<polyline points="848,993 871,980 893,967.4 959.2,954.2 1025.9,949.5 1093,980 1120,992" fill="none" stroke="#008000" stroke-width="1.8" stroke-linejoin="round"/>
<g stroke="#000" stroke-width="1.2" fill="none"><path d="M502,915.5 H508.5 V990"/><line x1="502" y1="938.5" x2="508.5" y2="938.5"/><line x1="502" y1="961.5" x2="508.5" y2="961.5"/>
<path d="M1315,915.5 H1308.5 V990"/><line x1="1315" y1="953" x2="1308.5" y2="953"/></g>
<g font-size="10.5" fill="#000" stroke="#000" stroke-width="0.12"><text x="487" y="919">65</text><text x="487" y="942">60</text><text x="487" y="965">55</text><text x="1317" y="919">80</text><text x="1317" y="956.5">70</text></g>
</svg>

<svg class="abs" style="left:212px;top:340px" width="40" height="35" viewBox="0 0 40 35"><defs><linearGradient id="hg" x1="0.2" y1="0.3" x2="0.9" y2="1"><stop offset="0" stop-color="#fff"/><stop offset=".55" stop-color="#fdfdfd"/><stop offset="1" stop-color="#cfcfcf"/></linearGradient></defs>
<path d="M14.4,10 Q14.4,8.1 16,8.1 Q17.6,8.1 17.6,10 L17.6,13.1 Q19.2,12.6 20.5,14.2 Q22.2,13.8 23.5,15.4 Q25.6,15.4 26.7,18 L26.7,21.7 L24.4,29.4 L15.6,29.4 L10.3,19.6 Q9.5,18 11,17.2 Q12.6,16.7 14.4,19.2 Z" fill="url(#hg)" stroke="#fff" stroke-width="2.6" stroke-linejoin="round" opacity=".9"/>
<path d="M14.4,10 Q14.4,8.1 16,8.1 Q17.6,8.1 17.6,10 L17.6,13.1 Q19.2,12.6 20.5,14.2 Q22.2,13.8 23.5,15.4 Q25.6,15.4 26.7,18 L26.7,21.7 L24.4,29.4 L15.6,29.4 L10.3,19.6 Q9.5,18 11,17.2 Q12.6,16.7 14.4,19.2 Z" fill="url(#hg)" stroke="#0a0c22" stroke-width="1.1" stroke-linejoin="round"/>
<g stroke="#0a0c22" stroke-width="1" stroke-linecap="round"><line x1="17.6" y1="13" x2="17.6" y2="17.6"/><line x1="20.5" y1="14.4" x2="20.5" y2="17.6"/><line x1="23.5" y1="15.8" x2="23.5" y2="18.5"/><line x1="14.4" y1="17" x2="14.4" y2="20.4"/></g></svg>
</div>
<div id="vsb" class="abs"><div class="thumbv" style="left:0;top:301px;width:15px;height:16px"></div>
<svg class="abs" style="left:0;top:0" width="15" height="856" viewBox="0 0 15 856"><path d="M4.2,11.2 L7.9,7.2 L11.6,11.2 Z" fill="url(#arr)"/><path d="M4.2,844.2 L11.6,844.2 L7.9,848.2 Z" fill="url(#arr)"/><defs><linearGradient id="arr" x1="0" y1="0" x2="1" y2="1"><stop offset="0" stop-color="#111"/><stop offset="1" stop-color="#666"/></linearGradient></defs></svg></div>
<div id="hsb" class="abs"><div class="thumbh" style="left:18px;top:0;width:1283px;height:15px"></div>
<svg class="abs" style="left:0;top:0" width="1472" height="15" viewBox="0 0 1472 15"><path d="M6,7.6 L10,4.2 L10,11 Z" fill="#222"/><path d="M1465,7.6 L1461,4.2 L1461,11 Z" fill="#222"/><g stroke="#333" stroke-width="1"><line x1="655.5" y1="5" x2="655.5" y2="11"/><line x1="658.5" y1="5" x2="658.5" y2="11"/><line x1="661.5" y1="5" x2="661.5" y2="11"/></g></svg></div>
<div id="corner" class="abs"></div>

<div id="wc" class="abs"><div class="wb" style="left:0;width:28px"></div><div class="wb" style="left:29px;width:26px"></div><div id="wclose" style="left:56px;width:47px"></div>
<svg class="abs" style="left:0;top:-1px" width="103" height="19" viewBox="0 0 103 19">
<rect x="9.7" y="10.3" width="10.6" height="4" rx="0.8" fill="#fff" stroke="#3a4558" stroke-width="0.8"/>
<path d="M36.8,5.2 h10.6 v9.2 h-10.6 Z M39.5,8.4 v3 h5.2 v-3 Z" fill="#fff" fill-rule="evenodd" stroke="#3a4558" stroke-width="0.8"/>
<path d="M73.6,5.4 L76.9,5.4 L79.4,8.3 L81.9,5.4 L85.2,5.4 L81.2,9.9 L85.4,14.4 L81.9,14.4 L79.4,11.6 L76.9,14.4 L73.4,14.4 L77.6,9.9 Z" fill="#fff" stroke="#5a2a22" stroke-width="0.7"/>
</svg></div>
<!-- right-side dotted handle -->
<svg class="abs" style="left:1565px;top:505px" width="15" height="45" viewBox="0 0 15 45"><defs><radialGradient id="dg"><stop offset="0" stop-color="#dde0e2"/><stop offset=".45" stop-color="#d6d9db"/><stop offset=".8" stop-color="#8f9496"/><stop offset="1" stop-color="#2d3234" stop-opacity="0"/></radialGradient></defs><g fill="url(#dg)"><ellipse cx="7" cy="11.1" rx="4.3" ry="3.9"/><ellipse cx="7" cy="23.1" rx="4.3" ry="3.9"/><ellipse cx="7" cy="34.8" rx="4.3" ry="3.9"/></g></svg>
<!-- size grip -->
<svg class="abs" style="left:1566px;top:1012px" width="14" height="14" viewBox="0 0 14 14"><g fill="#8e8e8e"><rect x="8.4" y="3.4" width="2" height="2"/><rect x="5.4" y="6.4" width="2" height="2"/><rect x="8.4" y="6.4" width="2" height="2"/><rect x="2.4" y="9.4" width="2" height="2"/><rect x="5.4" y="9.4" width="2" height="2"/><rect x="8.4" y="9.4" width="2" height="2"/></g><g fill="#ffffff"><rect x="9" y="4" width="2" height="2"/><rect x="6" y="7" width="2" height="2"/><rect x="9" y="7" width="2" height="2"/><rect x="3" y="10" width="2" height="2"/><rect x="6" y="10" width="2" height="2"/><rect x="9" y="10" width="2" height="2"/></g></svg>

</body>
</html>
